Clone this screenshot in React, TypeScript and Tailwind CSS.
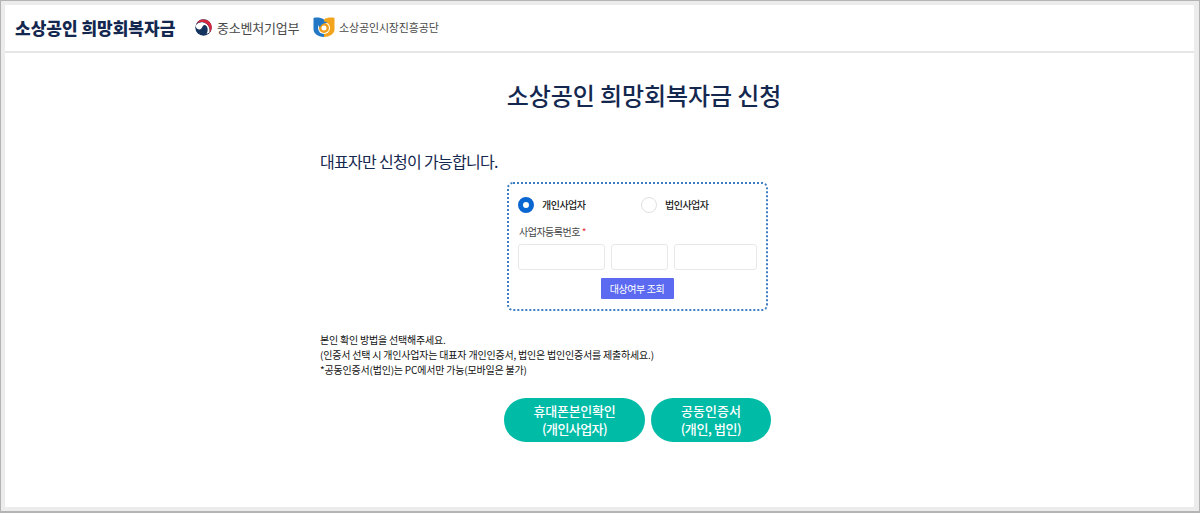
import React from 'react';

const font = { fontFamily: '"Noto Sans CJK KR", "Noto Sans", sans-serif' };

const MssLogo = () => (
  <svg width="17" height="17" viewBox="0 0 34 34" className="shrink-0">
    <circle cx="17" cy="17" r="16.5" fill="#14335f" />
    <path d="M3 11 C7 7 12 6 17 7 C25 8 31 18 29 27 L23 30 C28 21 24 12 19 12 C14 12 15 21 9 21 C5 21 2 18 1 14 Z" fill="#fff" />
    <path d="M3 9 A16.5 16.5 0 0 1 33.5 17 A16.5 16.5 0 0 1 29 28 C32 18 25 7 15 6 C10 5.5 6 7 3 9 Z" fill="#d7263d" />
  </svg>
);

const SemasLogo = () => (
  <svg width="22" height="20" viewBox="0 0 44 40" className="shrink-0">
    <path d="M1 2 C8 0 15 1 22 5 L22 40 C12 40 1 34 1 25 Z" fill="#2377c4" />
    <path d="M22 5 C28 1 36 0 43 2 L43 25 C43 34 32 40 22 40 Z" fill="#f2a51c" />
    <circle cx="22" cy="22" r="12" fill="#fff" />
    <circle cx="22" cy="22" r="7.5" fill="none" stroke="#ef9d1a" strokeWidth="5" />
    <path d="M12 13 C16 8 24 8 29 12 C22 11 16 14 14 21 C12 19 11 16 12 13 Z" fill="#2377c4" />
  </svg>
);

const Field = ({ className }: { className: string }) => (
  <input type="text" className={`h-[26px] rounded-[3px] border border-[#e8e8e8] bg-white ${className}`} />
);

export default function App() {
  return (
    <div
      style={font}
      className="w-[1200px] h-[513px] overflow-hidden bg-[#ececec] border-t border-l border-r border-b-2 border-[#b4b4b4] pt-1 pb-1 pl-1 pr-[5px] text-[#222]"
    >
      <div className="h-[502px] bg-white flex flex-col">
        {/* Header */}
        <header className="h-[48px] shrink-0 border-b-2 border-[#e6e6e6] flex items-center pl-[10px] pb-[2px]">
          <span className="w-[180px] text-[17px] font-black tracking-[0px] text-[#14284f] leading-none whitespace-nowrap">
            소상공인 희망회복자금
          </span>
          <MssLogo />
          <span className="ml-[5px] w-[96px] text-[13px] tracking-[-0.2px] text-[#4a4a4a] leading-none whitespace-nowrap">
            중소벤처기업부
          </span>
          <SemasLogo />
          <span className="ml-[4px] text-[11px] tracking-[-0.15px] text-[#4a4a4a] leading-none whitespace-nowrap">
            소상공인시장진흥공단
          </span>
        </header>

        {/* Main */}
        <main className="ml-[315px] w-[648px] flex flex-col">
          <h1 className="mt-[24px] h-[36px] text-center text-[24px] leading-[36px] tracking-[-0.1px] font-medium text-[#14284f]">
            소상공인 희망회복자금 신청
          </h1>
          <p className="mt-[36px] h-[24px] text-[16px] leading-[24px] tracking-[-0.7px] text-[#14284f]">
            대표자만 신청이 가능합니다.
          </p>

          <section className="mt-[9px] ml-[187px] w-[261px] h-[129px] rounded-[6px] border-2 border-dotted border-[#3a7dc0] pl-[9px] pr-[10px] pt-[12px]">
            <div className="flex items-center h-[18px]">
              <span className="w-[16px] h-[16px] rounded-full border-[5px] border-[#0a66d0] bg-white shrink-0" />
              <span className="ml-[8px] w-[99px] text-[10px] font-medium tracking-[-0.5px] leading-none">개인사업자</span>
              <span className="w-[16px] h-[16px] rounded-full border border-[#e0e0e0] bg-white shrink-0" />
              <span className="ml-[8px] text-[10px] font-medium tracking-[-0.5px] leading-none">법인사업자</span>
            </div>
            <div className="mt-[11px] h-[14px] pl-px text-[10px] leading-[14px] tracking-[-0.5px] text-[#444]">
              사업자등록번호 <span className="text-[#e0303a]">*</span>
            </div>
            <div className="mt-[5px] flex gap-[6px]">
              <Field className="w-[87px]" />
              <Field className="w-[57px]" />
              <Field className="w-[83px]" />
            </div>
            <div className="mt-[8px] flex justify-center">
              <button className="w-[73px] h-[21px] rounded-[1px] bg-[#5b6af0] text-white text-[10px] tracking-[-0.4px] leading-none">
                대상여부 조회
              </button>
            </div>
          </section>

          <div className="mt-[21px] text-[10px] leading-[15px] tracking-[-0.2px] text-[#111]">
            <p>본인 확인 방법을 선택해주세요.</p>
            <p>(인증서 선택 시 개인사업자는 대표자 개인인증서, 법인은 법인인증서를 제출하세요.)</p>
            <p>*공동인증서(법인)는 PC에서만 가능(모바일은 불가)</p>
          </div>

          <div className="mt-[21px] ml-[184px] flex gap-[6px]">
            <button className="w-[141px] h-[44px] rounded-full bg-[#00bca7] text-white text-[13px] leading-[18px] font-medium tracking-[-0.25px]">
              휴대폰본인확인
              <br />
              <span className="tracking-[-0.6px]">(개인사업자)</span>
            </button>
            <button className="w-[120px] h-[44px] rounded-full bg-[#00bca7] text-white text-[13px] leading-[18px] font-medium">
              공동인증서
              <br />
              <span className="tracking-[-0.4px]">(개인, 법인)</span>
            </button>
          </div>
        </main>
      </div>
    </div>
  );
}
